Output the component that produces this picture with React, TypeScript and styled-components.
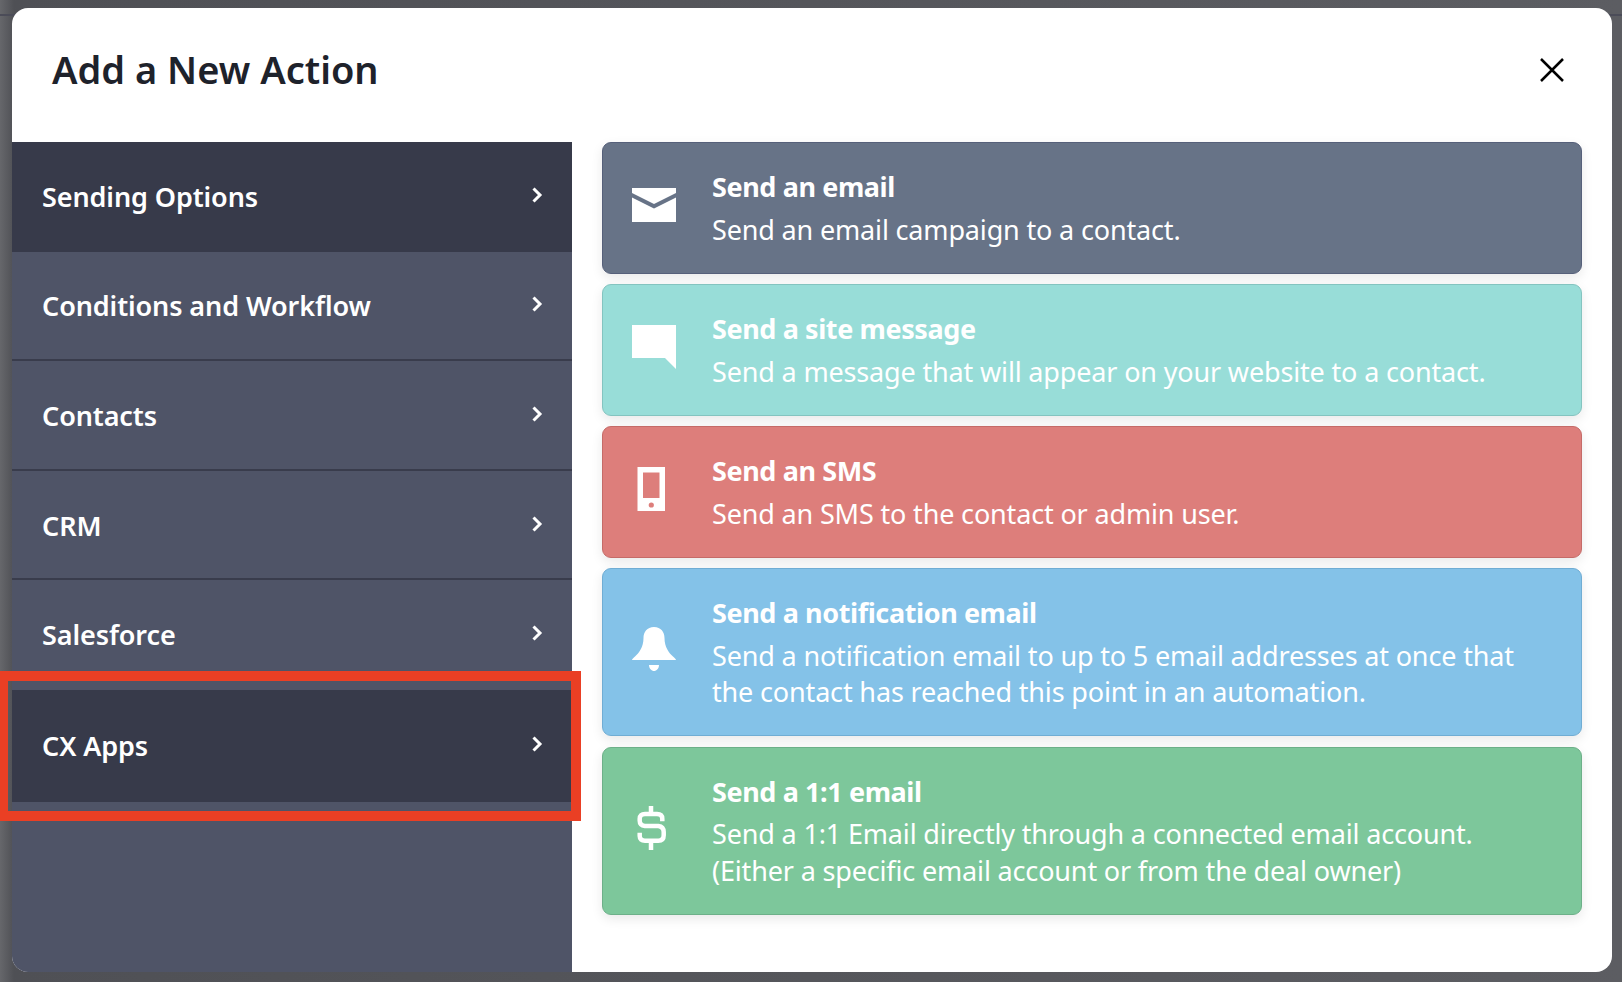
import React from "react";
import styled, { createGlobalStyle } from "styled-components";

const Global = createGlobalStyle`
  html, body { margin: 0; padding: 0; height: 100%; overflow: hidden; }
  body { font-family: "Noto Sans", "Open Sans", sans-serif; background: #55565b; }
`;

const Backdrop = styled.div`
  width: 1622px;
  height: 982px;
  box-sizing: border-box;
  padding: 8px 10px 10px 12px;
  background:
    linear-gradient(180deg, transparent 14px, #4b4c58 14px, #4b4c58 16px, transparent 16px),
    linear-gradient(90deg, #66676b 0, #4f5055 14px, #55565b 50%, #5c5d62 100%);
`;

const Modal = styled.div`
  position: relative;
  width: 1600px;
  height: 964px;
  background: #fff;
  border-radius: 16px;
  display: flex;
  flex-direction: column;
`;

const Header = styled.header`
  height: 134px;
  flex: none;
  display: flex;
  align-items: center;
  justify-content: space-between;
  padding: 0 48px 10px 40px;
  box-sizing: border-box;
`;

const Title = styled.h1`
  margin: -2px 0 0;
  font-size: 38px;
  font-weight: 600;
  line-height: 44px;
  color: #1e222b;
`;

const CloseButton = styled.button`
  border: 0;
  background: none;
  padding: 0;
  width: 24px;
  height: 24px;
  display: block;
  svg { display: block; }
`;

const Body = styled.div`
  flex: 1;
  display: flex;
  min-height: 0;
`;

const Sidebar = styled.nav`
  width: 560px;
  flex: none;
  background: #4f5467;
  border-bottom-left-radius: 16px;
  display: flex;
  flex-direction: column;
`;

const Row = styled.div<{ $active?: boolean; $tall?: boolean; $last?: boolean }>`
  position: relative;
  height: ${(p) => (p.$tall ? 112 : 109.6)}px;
  flex: none;
  box-sizing: border-box;
  display: flex;
  align-items: center;
  justify-content: space-between;
  padding: 0 29px 0 30px;
  background: ${(p) => (p.$active ? "#373a4a" : "transparent")};
  box-shadow: ${(p) => (p.$active || p.$last ? "none" : "inset 0 -2px 0 #393c4c")};
`;

const RowLabel = styled.span`
  font-size: 27px;
  font-weight: 600;
  color: #fff;
  line-height: 36px;
  letter-spacing: -0.1px;
`;

const ChevronMark = styled.svg`
  display: block;
  margin-top: -4px;
`;

const Highlight = styled.div`
  position: absolute;
  left: -12px;
  right: -9px;
  top: -19px;
  bottom: -19px;
  border: solid #ea3f24;
  border-width: 10px 10px 10px 8px;
  pointer-events: none;
`;

const Actions = styled.div`
  flex: 1;
  padding: 0 30px;
  display: flex;
  flex-direction: column;
  gap: 10.5px;
`;

const Card = styled.div<{ $bg: string; $edge: string }>`
  display: flex;
  box-sizing: border-box;
  padding: 26px 20px 24.5px 0;
  background: ${(p) => p.$bg};
  border: 1.5px solid ${(p) => p.$edge};
  border-radius: 9px;
  box-shadow: 0 4px 12px rgba(0, 0, 0, 0.09);
  color: #fff;
`;

const IconCell = styled.div`
  width: 109px;
  flex: none;
  display: flex;
  align-items: center;
  padding: 0 0 7px 29px;
  box-sizing: border-box;
  svg { display: block; }
`;

const CardText = styled.div`
  flex: 1;
  min-width: 0;
`;

const CardTitle = styled.div`
  font-size: 27px;
  font-weight: 700;
  line-height: 36.5px;
  margin-bottom: 6px;
  letter-spacing: -0.4px;
`;

const CardDesc = styled.div`
  font-size: 27px;
  font-weight: 400;
  line-height: 36.5px;
  letter-spacing: -0.16px;
`;

const Chevron = () => (
  <ChevronMark width="12" height="16" viewBox="0 0 12 16" fill="none">
    <path d="M2.5 1.5 L9 8 L2.5 14.5" stroke="#fff" strokeWidth="3" />
  </ChevronMark>
);

const MailIcon = () => (
  <svg width="44" height="34" viewBox="0 0 44 34" fill="#fff">
    <path d="M0 0H44V5L22 16L0 5Z" />
    <path d="M0 9.5L22 20.5L44 9.5V34H0Z" />
  </svg>
);

const MessageIcon = () => (
  <svg width="44" height="44" viewBox="0 0 44 44" fill="#fff">
    <path d="M0 0H44V44L33 33H0Z" />
  </svg>
);

const PhoneIcon = () => (
  <svg width="44" height="44" viewBox="0 0 44 44" fill="none">
    <path fillRule="evenodd" fill="#fff" d="M5.5 0H33V44H5.5ZM11 5.500V31H27.500V5.500Z" />
    <circle cx="19.3" cy="38" r="2.6" fill="#dd7e7b" />
  </svg>
);

const BellIcon = () => (
  <svg width="44" height="44" viewBox="0 0 44 44" fill="#fff">
    <path d="M22 0C29 0 32.500 5 32.500 11C32.500 20 37 26 41 29.500C42.500 31 44 32 44 33H0C0 32 1.500 31 3 29.500C7 26 11.500 20 11.500 11C11.500 5 15 0 22 0Z" />
    <path d="M17 38H27C27 41.500 24.500 44 22 44C19.500 44 17 41.500 17 38Z" />
  </svg>
);

const DollarIcon = () => (
  <svg width="44" height="44" viewBox="0 0 44 44" fill="none" stroke="#fff" strokeWidth="4.500">
    <path d="M30.300 15.300V12.700Q30.300 8 25 8H13Q7.700 8 7.700 12.700V14.700Q7.700 19.300 13 20H26.300Q31.700 20.700 31.700 26V29.300Q31.700 34.700 26.300 34.700H13Q7.700 34.700 7.700 30V26.700" />
    <path d="M19 0V7M19 36V44" />
  </svg>
);

const menu = ["Sending Options", "Conditions and Workflow", "Contacts", "CRM", "Salesforce"];

const actions = [
  { bg: "#677387", edge: "#56607a", icon: <MailIcon />, title: "Send an email", desc: ["Send an email campaign to a contact."] },
  { bg: "#98ddd8", edge: "#84c4c0", icon: <MessageIcon />, title: "Send a site message", desc: ["Send a message that will appear on your website to a contact."] },
  { bg: "#dd7e7b", edge: "#c56b68", icon: <PhoneIcon />, title: "Send an SMS", desc: ["Send an SMS to the contact or admin user."] },
  { bg: "#84c2e8", edge: "#70add4", icon: <BellIcon />, title: "Send a notification email", desc: ["Send a notification email to up to 5 email addresses at once that", "the contact has reached this point in an automation."] },
  { bg: "#7dc79b", edge: "#6db089", icon: <DollarIcon />, title: "Send a 1:1 email", desc: ["Send a 1:1 Email directly through a connected email account.", "(Either a specific email account or from the deal owner)"] },
];

export default function App() {
  return (
    <Backdrop>
      <Global />
      <Modal>
        <Header>
          <Title>Add a New Action</Title>
          <CloseButton aria-label="Close">
            <svg width="24" height="24" viewBox="0 0 24 24" fill="none">
              <path d="M1 1L23 23M23 1L1 23" stroke="#000" strokeWidth="2.500" />
            </svg>
          </CloseButton>
        </Header>
        <Body>
          <Sidebar>
            {menu.map((label, i) => (
              <Row key={label} $active={i === 0} $last={i === menu.length - 1}>
                <RowLabel>{label}</RowLabel>
                <Chevron />
              </Row>
            ))}
            <Row $active $tall>
              <RowLabel>CX Apps</RowLabel>
              <Chevron />
              <Highlight />
            </Row>
          </Sidebar>
          <Actions>
            {actions.map((a) => (
              <Card key={a.title} $bg={a.bg} $edge={a.edge}>
                <IconCell>{a.icon}</IconCell>
                <CardText>
                  <CardTitle>{a.title}</CardTitle>
                  {a.desc.map((line) => (
                    <CardDesc key={line}>{line}</CardDesc>
                  ))}
                </CardText>
              </Card>
            ))}
          </Actions>
        </Body>
      </Modal>
    </Backdrop>
  );
}
